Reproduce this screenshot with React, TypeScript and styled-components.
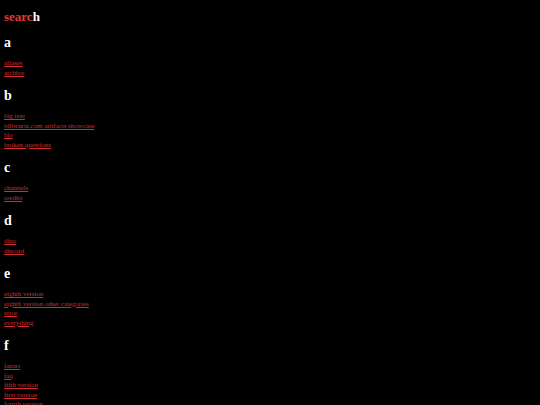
import { createGlobalStyle } from "styled-components";
import styled from "styled-components";

const GlobalStyle = createGlobalStyle`
  html, body {
    margin: 0;
    padding: 0;
    background: #000;
  }
  body {
    font-family: "Liberation Serif", "Times New Roman", serif;
    color: #fff;
  }
`;

const Page = styled.main`
  display: flex;
  flex-direction: column;
  padding: 10px 4px 0;
`;

const Title = styled.h1`
  margin: 0 0 13px;
  font-size: 13px;
  line-height: 13px;
  font-weight: 700;
  color: #fff;
`;

const Accent = styled.span`
  color: #e23a3a;
`;

const Section = styled.section`
  display: flex;
  flex-direction: column;
  margin-bottom: 12px;
`;

const Letter = styled.h2`
  margin: 0 0 8px;
  font-size: 14px;
  line-height: 14px;
  font-weight: 700;
  color: #fff;
`;

const LinkList = styled.div`
  display: flex;
  flex-direction: column;
  align-items: flex-start;
`;

const PageLink = styled.a`
  font-size: 6.9px;
  line-height: 9.5px;
  color: #cf2e2e;
  text-decoration: underline;
`;

const groups: { letter: string; pages: string[] }[] = [
  { letter: "a", pages: ["aliases", "archive"] },
  { letter: "b", pages: ["big text", "billwurtz.com artifacts showcase", "bio", "broken questions"] },
  { letter: "c", pages: ["channels", "credits"] },
  { letter: "d", pages: ["dino", "discord"] },
  { letter: "e", pages: ["eighth version", "eighth version other categories", "error", "everything"] },
  { letter: "f", pages: ["fanart", "faq", "fifth version", "first version", "fourth version"] },
  { letter: "g", pages: ["games", "glossary"] },
];

export default function App() {
  return (
    <>
      <GlobalStyle />
      <Page>
        <Title>
          <Accent>searc</Accent>h
        </Title>
        {groups.map((group) => (
          <Section key={group.letter}>
            <Letter>{group.letter}</Letter>
            <LinkList>
              {group.pages.map((page) => (
                <PageLink key={page} href={`#${page.replace(/ /g, "-")}`}>
                  {page}
                </PageLink>
              ))}
            </LinkList>
          </Section>
        ))}
      </Page>
    </>
  );
}
